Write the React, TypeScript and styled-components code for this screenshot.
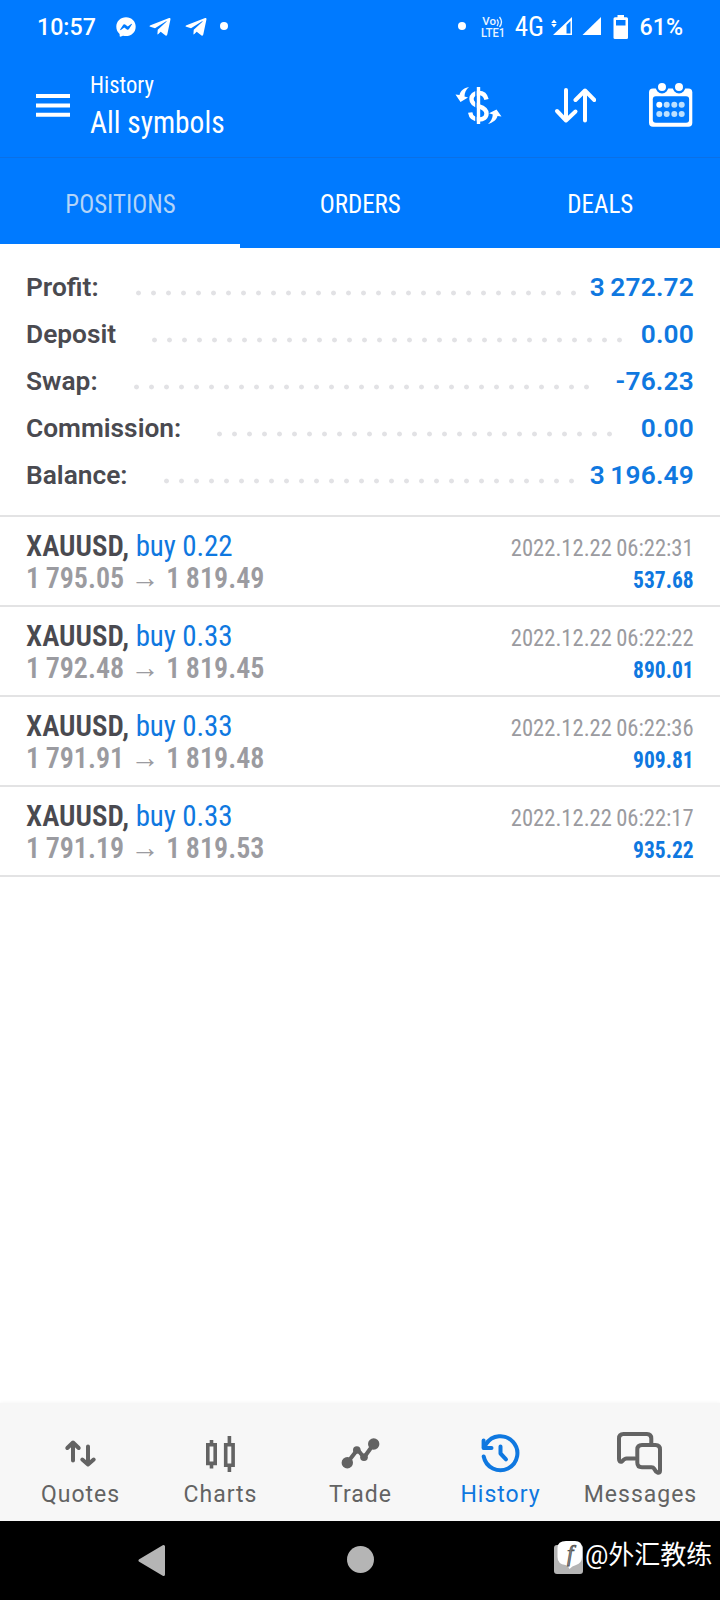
import React from "react";
import styled, { createGlobalStyle } from "styled-components";
import { FaFacebookMessenger, FaTelegramPlane } from "react-icons/fa";

const BLUE = "#007aff";
const VALUE = "#0f78e0";
const DARK = "#4a4a50";
const GREY = "#9b9ba0";
const CONDENSED = '"Roboto Condensed", Roboto, sans-serif';

const GlobalStyle = createGlobalStyle`
  * { box-sizing: border-box; }
  body { margin: 0; background: #fff; font-family: Roboto, sans-serif; }
  svg { display: block; flex: none; }
`;

const Screen = styled.div`
  position: relative;
  display: flex;
  flex-direction: column;
  width: 720px;
  height: 1600px;
  background: #fff;
  overflow: hidden;
`;

/* ---------- status bar ---------- */

const StatusBar = styled.div`
  display: flex;
  align-items: center;
  height: 54px;
  padding: 0 37px;
  background: ${BLUE};
  color: #fff;
`;

const StatusText = styled.span<{ $size?: number; $condensed?: boolean }>`
  font-family: ${(p) => (p.$condensed ? CONDENSED : "Roboto, sans-serif")};
  font-size: ${(p) => p.$size ?? 23.2}px;
  font-weight: ${(p) => (p.$condensed ? 450 : 470)};
  line-height: 30px;
  white-space: nowrap;
`;

const StatusGroup = styled.div<{ $gap: number; $push?: number }>`
  display: flex;
  align-items: center;
  gap: ${(p) => p.$gap}px;
  margin-left: ${(p) => p.$push ?? 0}px;
`;

const StatusSpacer = styled.div`
  flex: 1;
`;

const Dot = styled.i`
  width: 8px;
  height: 8px;
  margin-bottom: 2px;
  border-radius: 50%;
  background: #fff;
`;

/* ---------- app bar ---------- */

const AppBar = styled.header`
  display: flex;
  align-items: center;
  height: 104px;
  padding: 0 26px 1px 35px;
  background: ${BLUE};
  border-bottom: 1px solid #0a70e6;
  color: #fff;
`;

const Titles = styled.div`
  display: flex;
  flex-direction: column;
  align-items: flex-start;
  flex: 1;
  margin: 0 0 3px 19px;
  font-family: ${CONDENSED};
  line-height: 37px;
`;

const Caption = styled.span`
  font-size: 23.8px;
  transform: scaleX(0.95);
  transform-origin: left;
`;

const Title = styled.span`
  font-size: 32px;
  transform: scaleX(0.92);
  transform-origin: left;
`;

const Actions = styled.div`
  display: flex;
  align-items: center;
  gap: 52px;
`;

/* ---------- tabs ---------- */

const Tabs = styled.nav`
  display: grid;
  grid-template-columns: repeat(3, 1fr);
  height: 90px;
  background: ${BLUE};
`;

const Tab = styled.div<{ $active?: boolean }>`
  display: flex;
  align-items: center;
  justify-content: center;
  padding-top: ${(p) => (p.$active ? 6 : 2)}px;
  border-bottom: ${(p) => (p.$active ? "4px solid #fff" : "none")};
  color: ${(p) => (p.$active ? "#b3d4f8" : "#fff")};
  font-family: ${CONDENSED};
  font-size: 26px;

  span {
    transform: scaleX(0.96);
  }
`;

/* ---------- summary ---------- */

const Summary = styled.section`
  padding: 15px 26px 17px;
  border-bottom: 2px solid #e3e3e4;
`;

const SummaryRow = styled.div`
  display: flex;
  align-items: center;
  height: 47px;
  font-size: 26.3px;
  font-weight: 640;
`;

const SummaryLabel = styled.span`
  color: ${DARK};
`;

const Leader = styled.span<{ $dots: number; $gap: number }>`
  width: ${(p) => p.$dots * 15}px;
  height: 6px;
  margin-top: 12px;
  margin-left: ${(p) => p.$gap}px;
  background: radial-gradient(circle, #e2e2e5 2px, transparent 2.8px) 0 0 / 15px 6px;
`;

const SummaryValue = styled.span`
  margin-left: auto;
  color: ${VALUE};
  letter-spacing: 0.2px;
  word-spacing: -1.5px;
`;

/* ---------- positions ---------- */

const Position = styled.article`
  display: flex;
  justify-content: space-between;
  height: 90px;
  padding: 13px 26px 0;
  border-bottom: 2px solid #e3e3e4;
  font-family: ${CONDENSED};
  line-height: 32px;
  white-space: nowrap;
`;

const Symbol = styled.div`
  font-size: 30px;
  font-weight: 600;
  color: ${DARK};
  transform: scaleX(0.965);
  transform-origin: left;
`;

const Side = styled.span`
  font-weight: 400;
  letter-spacing: -0.1px;
  color: ${VALUE};
`;

const Prices = styled.div`
  display: flex;
  font-size: 30px;
  font-weight: 600;
  color: ${GREY};
  word-spacing: -1px;
  transform: scaleX(0.935);
  transform-origin: left;
`;

const Arrow = styled.span`
  width: 45px;
  text-align: center;
  font-family: "Liberation Sans", sans-serif;
  font-size: 31px;
  font-weight: 400;
`;

const Result = styled.div`
  padding-top: 2px;
  text-align: right;
`;

const Time = styled.div`
  font-size: 24.3px;
  color: ${GREY};
  word-spacing: -1px;
  transform: scaleX(0.93);
  transform-origin: right;
`;

const Profit = styled.div`
  font-size: 24.3px;
  font-weight: 700;
  color: ${VALUE};
  transform: scaleX(0.885);
  transform-origin: right;
`;

/* ---------- bottom navigation ---------- */

const BottomNav = styled.nav`
  display: grid;
  grid-template-columns: repeat(5, 140px);
  justify-content: center;
  height: 118px;
  margin-top: auto;
  padding-top: 27px;
  background: #f7f7f7;
  box-shadow: 0 -1px 3px rgba(0, 0, 0, 0.03);
`;

const NavItem = styled.div<{ $active?: boolean }>`
  display: flex;
  flex-direction: column;
  align-items: center;
  color: ${(p) => (p.$active ? VALUE : "#636363")};
`;

const NavLabel = styled.span`
  padding: 1px 0 0 1px;
  font-size: 23px;
  line-height: 32px;
  letter-spacing: 1px;
`;

const SystemBar = styled.div`
  display: flex;
  align-items: center;
  gap: 180px;
  height: 79px;
  padding: 0 0 2px 138px;
  background: #000;
`;

const Watermark = styled.div`
  position: absolute;
  top: 1538px;
  left: 557px;
  display: flex;
  align-items: center;
  gap: 1px;
  color: #fff;
  font-family: Roboto, "Noto Sans CJK SC", sans-serif;
  font-size: 26px;
  line-height: 34px;
  white-space: nowrap;
`;

/* ---------- icons ---------- */

const MenuIcon = () => (
  <svg width="36" height="24" viewBox="0 0 36 24" fill="#fff">
    <path d="M1 1h34v4H1zM1 10.4h34v4H1zM1 19.8h34v4H1z" />
  </svg>
);

const VolteMark = styled.div`
  display: flex;
  flex-direction: column;
  width: 27px;
  color: #e8f4ff;
  font-weight: 500;
`;

const VolteTop = styled.div`
  display: flex;
  height: 11px;
  padding-left: 1px;
  font-size: 11.5px;
  line-height: 11px;
`;

const VolteBottom = styled.div`
  height: 12px;
  font-size: 12px;
  line-height: 12px;
  white-space: nowrap;
  transform: scaleX(0.93);
  transform-origin: left;
`;

const VolteIcon = () => (
  <VolteMark>
    <VolteTop>
      Vo
      <svg width="8" height="12" viewBox="0 0 8 12" fill="none" stroke="currentColor" strokeWidth="1.300">
        <path d="M1 3.500q2.500 3 0 6.500M3.500 1q4 5 0 10" />
      </svg>
    </VolteTop>
    <VolteBottom>LTE1</VolteBottom>
  </VolteMark>
);

const WeakSignalIcon = () => (
  <svg width="22" height="20" viewBox="0 0 22 20" fill="#fff">
    <path d="M3 2.500l2.800 3.500h-5.600zM3 10.500l2.800-3.500h-5.600z" />
    <path fillRule="evenodd" d="M21 0v18H2zM19.500 4L15.500 8V16.500H19.500z" />
  </svg>
);

const SignalIcon = () => (
  <svg width="20" height="20" viewBox="0 0 20 20" fill="#fff">
    <path d="M19 0v18H.5z" />
  </svg>
);

const BatteryIcon = () => (
  <svg width="16" height="26" viewBox="0 0 16 26" fill="#fff">
    <path fillRule="evenodd" d="M4.500 1h6.500v2.200h2.500q1.500 0 1.500 1.500v19q0 1.300-1.500 1.300h-11.500q-1.500 0-1.500-1.300v-19q0-1.500 1.500-1.500h2.500zM3 6v5.500h9.500v-5.500z" />
  </svg>
);

const CurrencyIcon = () => (
  <svg width="48" height="42" viewBox="0 0 48 42" fill="none">
    <path
      d="M32.500 15.500C31.500 11 28.500 9 25 9C20 9 17.500 11.500 17.500 15C17.500 19.500 21 21 25 22.300C30 23.800 32.500 25.500 32.500 29.500C32.500 33.500 29.500 35.500 25 35.500C20.500 35.500 17 33.500 16.200 28.500"
      stroke="#fff"
      strokeWidth="4.400"
    />
    <path d="M22 5v33" stroke={BLUE} strokeWidth="1.600" />
    <path d="M24.500 3v37" stroke="#fff" strokeWidth="3.400" />
    <path d="M15 3C10 4 6.500 6.500 5.500 11L1.500 10.500L6.500 18L14 13.500L10.500 12.500C10.500 8.500 12 5.500 15 3z" fill="#fff" />
    <path d="M34 40C39 38.500 42.500 36 43.500 32L47.500 32.500L42.500 25.500L35 29.200L38.800 30.500C38.500 34.500 37 37.500 34 40z" fill="#fff" />
  </svg>
);

const SortIcon = () => (
  <svg width="42" height="38" viewBox="0 0 42 38" fill="none" stroke="#fff" strokeWidth="4" strokeLinecap="round" strokeLinejoin="round">
    <path d="M12 4v30M3 25l9 9.500 9.500-9" />
    <path d="M31 34.500v-30M21.500 14l9.500-9.500 9.300 9.500" />
  </svg>
);

const CalendarIcon = () => (
  <svg width="46" height="46" viewBox="0 0 46 46">
    <rect x="1" y="6.500" width="43.300" height="38.300" rx="4" fill="#fff" />
    <rect x="4.800" y="14.300" width="36.300" height="26.400" rx="3" fill={BLUE} />
    {[14, 31].map((x) => (
      <circle key={x} cx={x} cy="5" r="5.200" fill="#fff" stroke={BLUE} strokeWidth="2.400" />
    ))}
    {[11.3, 18.7, 26.3, 33.7].map((x) =>
      [22.7, 32].map((y) => (
        <circle key={`${x}-${y}`} cx={x} cy={y} r="3" fill={x < 12 && y < 25 ? "#fff" : "#bce0ff"} />
      )),
    )}
  </svg>
);

const NavSvg = styled.svg.attrs({ width: 48, height: 48, viewBox: "0 0 48 48" })<{ $square?: boolean }>`
  fill: none;
  stroke: currentColor;
  stroke-width: ${(p) => (p.$square ? 3.6 : 4)};
  stroke-linecap: ${(p) => (p.$square ? "butt" : "round")};
  stroke-linejoin: ${(p) => (p.$square ? "miter" : "round")};
`;

const QuotesIcon = () => (
  <NavSvg>
    <path d="M17 30.500V12.500M11.300 18L17 12.500L22.700 18M32 16.500V34M26.300 29.500L32 34.500L37.700 29.500" />
  </NavSvg>
);

const ChartsIcon = () => (
  <NavSvg $square>
    <path d="M11.800 14.800h7.400v18.600h-7.400zM29.700 14.800h7.400v20.400h-7.400zM15.500 10v4M15.500 34v4.500M33.400 6v8M33.400 36v6" />
  </NavSvg>
);

const TradeIcon = () => (
  <NavSvg>
    <path d="M11.300 32.700L21.500 19.500L28 27.500L37.700 14" />
    <g fill="currentColor" stroke="none">
      <circle cx="11.300" cy="32.700" r="5.700" />
      <circle cx="20.800" cy="20" r="3.800" />
      <circle cx="28" cy="27.300" r="3.800" />
      <circle cx="37.700" cy="14" r="5.700" />
    </g>
  </NavSvg>
);

const HistoryIcon = () => (
  <NavSvg>
    <path d="M7.700 26.500A17 17 0 1 0 10 14.200L8 17.500" />
    <path d="M7.600 10.500V18H15.500M24.500 16.500V23.500L30 29.300" />
  </NavSvg>
);

const MessagesIcon = () => (
  <NavSvg>
    <path d="M35.300 14V8.500Q35.300 4 31 4H7.500Q3 4 3 8.500V29Q3 32.500 6 31.500Q8.500 28.500 10.500 28.500H19" />
    <path d="M26 15H39.500Q44 15 44 19.500V41Q44 43.300 41.500 42.500Q39.500 41.500 38 38.500Q37.300 37.300 35.500 37.300H26Q21.300 37.300 21.300 32.500V19.500Q21.300 15 26 15Z" />
  </NavSvg>
);

const BackIcon = () => (
  <svg width="28" height="34" viewBox="0 0 28 34" fill="#b5b5b5" stroke="#b5b5b5" strokeWidth="3" strokeLinejoin="round">
    <path d="M25.500 3.500v28L2 17.500z" />
  </svg>
);

const HomeButton = styled.i`
  width: 27px;
  height: 27px;
  margin-left: 1px;
  border-radius: 50%;
  background: #b5b5b5;
`;

const RecentsButton = styled.i`
  width: 29px;
  height: 29px;
  border-radius: 3px;
  background: #b5b5b5;
`;

const BrandIcon = () => (
  <svg width="27" height="30" viewBox="0 0 27 30">
    <path d="M9 1h9q7 0 7 7v9q0 6-6 8-4 1-6.500 4-1-3-4-4-8-1-8-8v-9q0-7 8.500-7z" fill="#fff" />
    <text x="10" y="21" fontFamily="Liberation Serif, serif" fontStyle="italic" fontSize="23" fill="#888" stroke="#555" strokeWidth="0.800">
      f
    </text>
  </svg>
);

/* ---------- data ---------- */

const totals = [
  { label: "Profit:", value: "3 272.72", dots: 30, gap: 32 },
  { label: "Deposit", value: "0.00", dots: 32, gap: 31 },
  { label: "Swap:", value: "-76.23", dots: 31, gap: 31 },
  { label: "Commission:", value: "0.00", dots: 27, gap: 31 },
  { label: "Balance:", value: "3 196.49", dots: 28, gap: 31 },
];

const positions = [
  { side: "buy 0.22", from: "1 795.05", to: "1 819.49", time: "2022.12.22 06:22:31", profit: "537.68" },
  { side: "buy 0.33", from: "1 792.48", to: "1 819.45", time: "2022.12.22 06:22:22", profit: "890.01" },
  { side: "buy 0.33", from: "1 791.91", to: "1 819.48", time: "2022.12.22 06:22:36", profit: "909.81" },
  { side: "buy 0.33", from: "1 791.19", to: "1 819.53", time: "2022.12.22 06:22:17", profit: "935.22" },
];

const navItems = [
  { label: "Quotes", Icon: QuotesIcon },
  { label: "Charts", Icon: ChartsIcon },
  { label: "Trade", Icon: TradeIcon },
  { label: "History", Icon: HistoryIcon, active: true },
  { label: "Messages", Icon: MessagesIcon },
];

export default function App() {
  return (
    <Screen>
      <GlobalStyle />
      <StatusBar>
        <StatusText>10:57</StatusText>
        <StatusGroup $gap={12} $push={20}>
          <FaFacebookMessenger size={20} />
          <FaTelegramPlane size={24} />
          <FaTelegramPlane size={24} />
          <Dot />
        </StatusGroup>
        <StatusSpacer />
        <StatusGroup $gap={9}>
          <Dot />
          <StatusGroup $gap={6.5} $push={6}>
            <VolteIcon />
            <StatusText $size={27} $condensed>4G</StatusText>
            <WeakSignalIcon />
          </StatusGroup>
          <SignalIcon />
          <StatusGroup $gap={11} $push={2}>
            <BatteryIcon />
            <StatusText>61%</StatusText>
          </StatusGroup>
        </StatusGroup>
      </StatusBar>

      <AppBar>
        <MenuIcon />
        <Titles>
          <Caption>History</Caption>
          <Title>All symbols</Title>
        </Titles>
        <Actions>
          <CurrencyIcon />
          <SortIcon />
          <CalendarIcon />
        </Actions>
      </AppBar>

      <Tabs>
        <Tab $active>
          <span>POSITIONS</span>
        </Tab>
        <Tab>
          <span>ORDERS</span>
        </Tab>
        <Tab>
          <span>DEALS</span>
        </Tab>
      </Tabs>

      <Summary>
        {totals.map((t) => (
          <SummaryRow key={t.label}>
            <SummaryLabel>{t.label}</SummaryLabel>
            <Leader $dots={t.dots} $gap={t.gap} />
            <SummaryValue>{t.value}</SummaryValue>
          </SummaryRow>
        ))}
      </Summary>

      {positions.map((p) => (
        <Position key={p.time}>
          <div>
            <Symbol>
              XAUUSD, <Side>{p.side}</Side>
            </Symbol>
            <Prices>
              <span>{p.from}</span>
              <Arrow>→</Arrow>
              <span>{p.to}</span>
            </Prices>
          </div>
          <Result>
            <Time>{p.time}</Time>
            <Profit>{p.profit}</Profit>
          </Result>
        </Position>
      ))}

      <BottomNav>
        {navItems.map(({ label, Icon, active }) => (
          <NavItem key={label} $active={active}>
            <Icon />
            <NavLabel>{label}</NavLabel>
          </NavItem>
        ))}
      </BottomNav>

      <SystemBar>
        <BackIcon />
        <HomeButton />
        <RecentsButton />
      </SystemBar>

      <Watermark>
        <BrandIcon />
        <span>@外汇教练</span>
      </Watermark>
    </Screen>
  );
}
